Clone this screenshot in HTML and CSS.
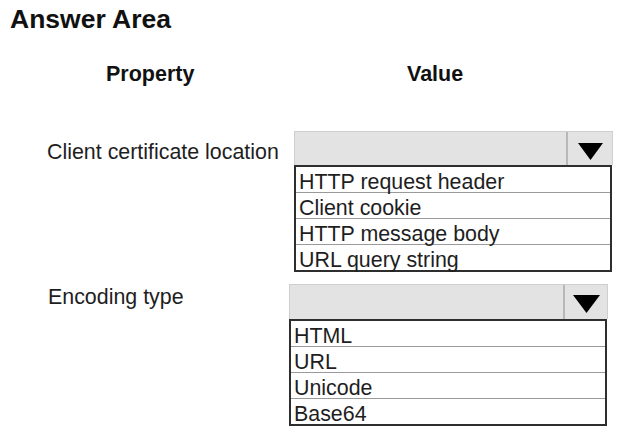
FILE: index.html
```html
<!DOCTYPE html>
<html lang="en">
<head>
<meta charset="utf-8">
<title>Answer Area</title>
<link rel="stylesheet" href="styles.css">
</head>
<body>
<main class="page">
  <h1 class="title">Answer Area</h1>
  <div class="heads">
    <span class="head">Property</span>
    <span class="head">Value</span>
  </div>

  <div class="row row-first">
    <span class="label">Client certificate location</span>
    <div class="dropdown">
      <div class="select">
        <span class="field"></span>
        <span class="button">
          <svg class="arrow" width="25" height="17" viewBox="0 0 25 17"><polygon points="0,0 25,0 12.5,17" fill="#000"/></svg>
        </span>
      </div>
      <ul class="options">
        <li class="option">HTTP request header</li>
        <li class="option">Client cookie</li>
        <li class="option">HTTP message body</li>
        <li class="option">URL query string</li>
      </ul>
    </div>
  </div>

  <div class="row row-second">
    <span class="label">Encoding type</span>
    <div class="dropdown">
      <div class="select">
        <span class="field"></span>
        <span class="button">
          <svg class="arrow" width="27" height="18" viewBox="0 0 27 18"><polygon points="0,0 27,0 13.5,18" fill="#000"/></svg>
        </span>
      </div>
      <ul class="options">
        <li class="option">HTML</li>
        <li class="option">URL</li>
        <li class="option">Unicode</li>
        <li class="option">Base64</li>
      </ul>
    </div>
  </div>
</main>
</body>
</html>
```

FILE: styles.css
```css
* { box-sizing: border-box; }

html, body {
  margin: 0;
  padding: 0;
  background: #ffffff;
}

body {
  font-family: "Liberation Sans", Arial, sans-serif;
  color: #1e1e1e;
}

.page {
  width: 626px;
  height: 441px;
  overflow: hidden;
}

.title {
  margin: 0;
  padding: 4px 0 0 10px;
  font-size: 26.5px;
  font-weight: bold;
  line-height: 30px;
  color: #111;
}

.heads {
  display: grid;
  grid-template-columns: 301px auto;
  padding-left: 106px;
  margin-top: 28px;
}

.head {
  font-size: 21.5px;
  font-weight: bold;
  line-height: 24px;
  color: #111;
}

.row {
  display: flex;
  align-items: flex-start;
}

.row-first {
  margin-top: 45px;
  padding-left: 47px;
}

.row-second {
  margin-top: 12px;
  padding-left: 48px;
}

.label {
  font-size: 21.4px;
  line-height: 24px;
}

.row-first .label {
  width: 247px;
  padding-top: 9px;
}

.row-second .label {
  width: 241px;
  padding-top: 1px;
}

.dropdown {
  width: 319px;
}

.select {
  display: flex;
  height: 34px;
  background: #e3e3e3;
  border: 1px solid #cfcfcf;
  border-bottom: none;
}

.row-second .select {
  height: 35px;
}

.field {
  flex: 1;
}

.button {
  width: 46px;
  border-left: 2px solid #b8b8b8;
  display: flex;
  justify-content: center;
  padding-top: 11px;
}

.row-second .button {
  width: 44px;
  padding-top: 10px;
}

.arrow {
  display: block;
}

.options {
  list-style: none;
  margin: 0;
  padding: 0;
  border: 2px solid #2e2e2e;
  background: #fff;
  margin-right: 1px;
}

.option {
  height: 26px;
  padding: 5px 0 0 3px;
  font-size: 21.4px;
  line-height: 20px;
  border-bottom: 1px solid #9a9a9a;
  white-space: nowrap;
}

.option:last-child {
  border-bottom: none;
  height: 25px;
}
```
